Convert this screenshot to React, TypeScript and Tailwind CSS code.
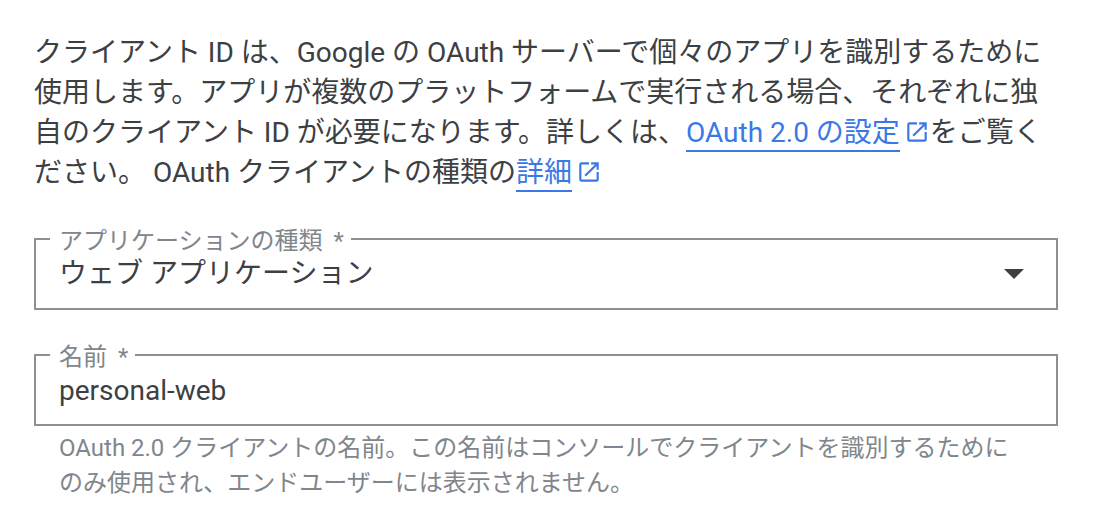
import React from 'react';

const ExternalIcon = ({ className }: { className: string }) => (
  <svg viewBox="0 0 24 24" className={className} fill="currentColor">
    <path d="M19 19H5V5h7V3H5a2 2 0 0 0-2 2v14a2 2 0 0 0 2 2h14a2 2 0 0 0 2-2v-7h-2v7zM14 3v2h3.59l-9.83 9.83 1.41 1.41L19 6.41V10h2V3h-7z" />
  </svg>
);

const OutlinedField = ({ label, children }: { label: string; children: React.ReactNode }) => (
  <fieldset className="border-2 border-[#8b8f93] h-[83px] px-[23px] flex items-start">
    <legend className="ml-[-9px] pl-[9px] pr-[7px] pt-[4px] text-[24px] leading-[20px] [word-spacing:5px] text-[#80868b]">{label}</legend>
    {children}
  </fieldset>
);

export default function App() {
  return (
    <div className="w-[1094px] h-[516px] overflow-hidden bg-white pl-[34px] pr-[36px] pt-[33px] text-[#3c4043] font-['Roboto','Noto_Sans_CJK_JP',sans-serif]">
      <p className="text-[28px] leading-[40px] w-[1024px]">
        クライアント ID は、Google の OAuth サーバーで個々のアプリを識別するために使用します。アプリが複数のプラットフォームで実行される場合、それぞれに独自のクライアント ID が必要になります。詳しくは、
        <a className="text-[#3b78e7] border-b-2 border-[#3b78e7] pb-[1px]">OAuth 2.0 の設定</a>
        <ExternalIcon className="inline w-[26px] h-[26px] ml-[4px] text-[#3b78e7] align-[-3px]" />
        をご覧ください。 OAuth クライアントの種類の
        <a className="text-[#3b78e7] border-b-2 border-[#3b78e7] pb-[1px]">詳細</a>
        <ExternalIcon className="inline w-[26px] h-[26px] ml-[4px] text-[#3b78e7] align-[-3px]" />
      </p>
      <div className="mt-[34px]">
        <OutlinedField label="アプリケーションの種類 *">
          <div className="flex-1 flex items-center justify-between h-[46px] text-[28px] leading-[40px] pr-[9px]">
            <span>ウェブ アプリケーション</span>
            <span className="w-0 h-0 border-x-[10px] border-x-transparent border-t-[10px] border-t-[#3c4043]" />
          </div>
        </OutlinedField>
      </div>
      <div className="mt-[33px]">
        <OutlinedField label="名前 *">
          <div className="flex-1 h-[48px] flex items-center text-[28px] leading-[40px]">personal-web</div>
        </OutlinedField>
      </div>
      <p className="mt-[5px] ml-[25px] w-[960px] text-[24px] leading-[35px] text-[#80868b]">
        OAuth 2.0 クライアントの名前。この名前はコンソールでクライアントを識別するためにのみ使用され、エンドユーザーには表示されません。
      </p>
    </div>
  );
}
